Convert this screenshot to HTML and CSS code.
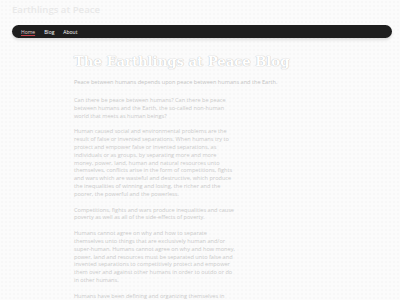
FILE: index.html
```html
<!DOCTYPE html>
<html lang="en">
<head>
  <meta charset="UTF-8">
  <meta name="viewport" content="width=device-width, initial-scale=1.0">
  <title>Earthlings at Peace</title>
  <link rel="stylesheet" href="styles.css">
</head>
<body>
  <header class="site-header">
    <div class="site-title">Earthlings at Peace</div>
    <nav class="navbar">
      <a class="nav-link active" href="#">Home</a>
      <a class="nav-link" href="#">Blog</a>
      <a class="nav-link" href="#">About</a>
    </nav>
  </header>

  <main class="blog">
    <h1 class="blog-title">The Earthlings at Peace Blog</h1>
    <p class="blog-lead">Peace between humans depends upon peace between humans and the Earth.</p>

    <div class="post">
      <p>Can there be peace between humans? Can there be peace between humans and the Earth, the so-called non-human world that meets as human beings?</p>
      <p>Human caused social and environmental problems are the result of false or invented separations. When humans try to protect and empower false or invented separations, as individuals or as groups, by separating more and more money, power, land, human and natural resources unto themselves, conflicts arise in the form of competitions, fights and wars which are wasteful and destructive, which produce the inequalities of winning and losing, the richer and the poorer, the powerful and the powerless.</p>
      <p>Competitions, fights and wars produce inequalities and cause poverty as well as all of the side-effects of poverty.</p>
      <p>Humans cannot agree on why and how to separate themselves unto things that are exclusively human and/or super-human. Humans cannot agree on why and how money, power, land and resources must be separated unto false and invented separations to competitively protect and empower them over and against other humans in order to outdo or do in other humans.</p>
      <p>Humans have been defining and organizing themselves in</p>
    </div>
  </main>
</body>
</html>
```

FILE: styles.css
```css
body {
  margin: 0;
  font-family: 'Open Sans', sans-serif;
  background-color: #fbfbfb;
  background-image: radial-gradient(#f1f1f1 0.6px, transparent 0.8px);
  background-size: 4px 4px;
  overflow: hidden;
  height: 300px;
}

.site-header {
  padding: 3px 8px 0 12px;
}

.site-title {
  font-size: 9.6px;
  font-weight: 600;
  line-height: 13px;
  color: #e9e9e9;
  height: 22px;
}

.navbar {
  display: flex;
  align-items: center;
  gap: 9px;
  height: 13px;
  padding: 0 9px;
  background: #1e1e1e;
  border-radius: 7px;
  box-shadow: 0 2px 3px rgba(0, 0, 0, 0.12);
}

.nav-link {
  font-size: 5px;
  color: #ffffff;
  text-decoration: none;
}

.nav-link.active {
  color: #e0d0d0;
  text-decoration: underline;
  text-decoration-color: #c0404a;
}

.blog {
  margin-left: 74px;
  width: 240px;
}

.blog-title {
  margin: 15px 0 0;
  font-family: 'DejaVu Serif', serif;
  font-size: 13.2px;
  line-height: 17px;
  white-space: nowrap;
  color: #ffffff;
  text-shadow: 0 0 1px #c4c4c4, 0 0 1px #c4c4c4;
}

.blog-lead {
  margin: 8px 0 0;
  font-size: 5.6px;
  line-height: 8px;
  color: #c4c4c4;
}

.post {
  width: 162px;
  margin-top: 11px;
}

.post p {
  margin: 0 0 8px;
  font-size: 5.6px;
  line-height: 7.8px;
  color: #cacaca;
}
```
